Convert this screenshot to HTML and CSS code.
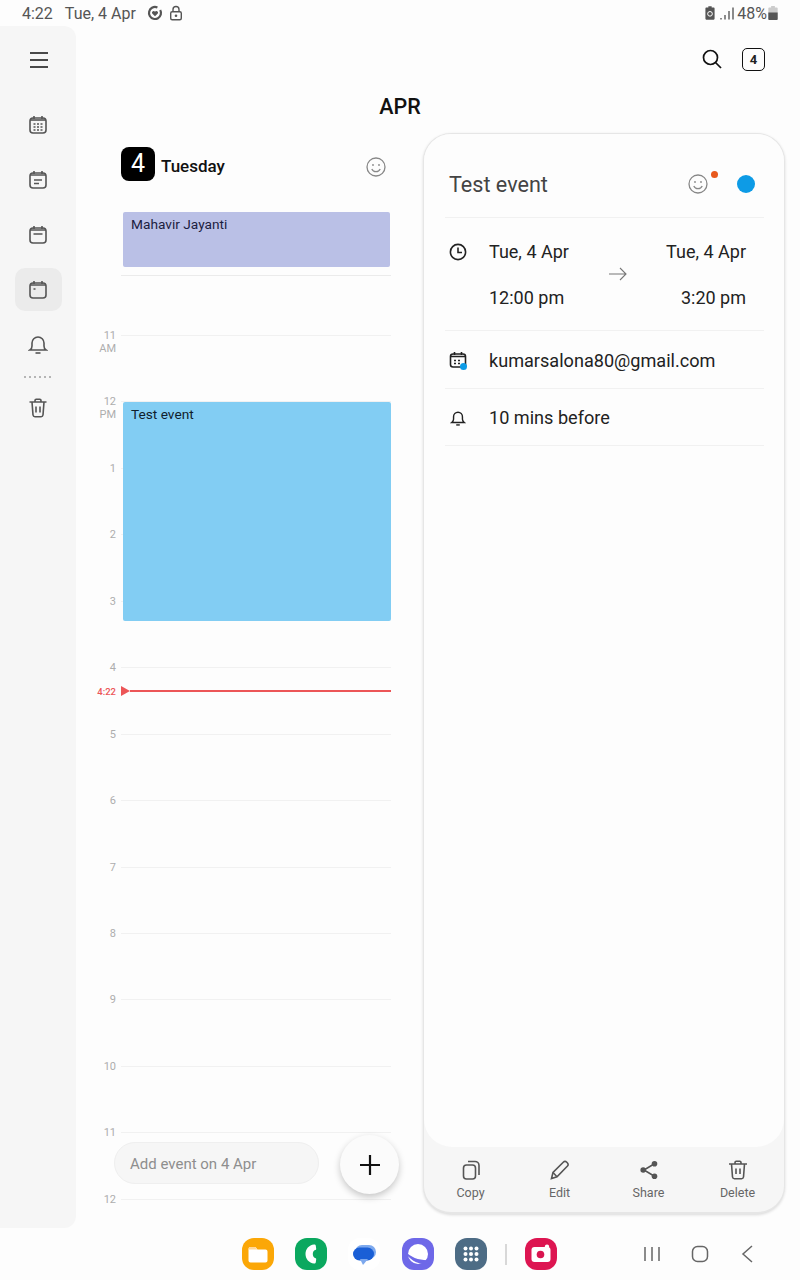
FILE: index.html
```html
<!DOCTYPE html>
<html>
<head>
    <meta charset="utf-8" />
    <meta name="viewport" content="width=device-width, initial-scale=1.0">
    <title>Calendar</title>
    <link rel="stylesheet" href="styles.css">
</head>
<body>
<div class="page">

    <div class="status">
        <span class="status-time">4:22</span>
        <span class="status-date">Tue, 4 Apr</span>
        <svg class="status-icon" viewBox="0 0 16 16"><circle cx="8" cy="8" r="6" fill="none" stroke="#555" stroke-width="2.2" stroke-dasharray="33 4.700" transform="rotate(-30 8 8)"/><path d="M8 11.300 5.200 8.400a1.600 1.600 0 0 1 2.800-1.600 1.600 1.600 0 0 1 2.800 1.600z" fill="#555"/></svg>
        <svg class="status-icon" viewBox="0 0 16 16"><path d="M5 7V4.500a3 3 0 0 1 6 0V7" fill="none" stroke="#555" stroke-width="1.400"/><rect x="2.700" y="6.700" width="10.600" height="8" rx="1.500" fill="none" stroke="#555" stroke-width="1.400"/><circle cx="8" cy="10.700" r="1.300" fill="#555"/></svg>
        <span class="status-right">
            <svg class="status-small" viewBox="0 0 12 16"><path d="M4 0h4v1.500h2.500a1 1 0 0 1 1 1V15a1 1 0 0 1-1 1h-9a1 1 0 0 1-1-1V2.500a1 1 0 0 1 1-1H4z" fill="#555"/><circle cx="6" cy="9" r="2.800" fill="none" stroke="#fff" stroke-width="1.200"/></svg>
            <svg class="status-signal" viewBox="0 0 14 13"><path d="M1 11v1.500M5 8v4.500M9 4v8.500M13 .5v12" stroke="#666" stroke-width="1.500" fill="none"/></svg>
            <span class="status-battery-text">48%</span>
            <svg class="status-small" viewBox="0 0 10 15"><path d="M3 0h4v1.500h2a1 1 0 0 1 1 1V14a1 1 0 0 1-1 1H1a1 1 0 0 1-1-1V2.500a1 1 0 0 1 1-1h2z" fill="#ccc"/><path d="M0 7h10v7a1 1 0 0 1-1 1H1a1 1 0 0 1-1-1z" fill="#555"/></svg>
        </span>
    </div>

    <div class="workspace">

        <nav class="sidebar">
            <svg class="menu-icon" viewBox="0 0 18 16"><path d="M0 1h18M0 8h18M0 15h18" stroke="#111" stroke-width="1.700" fill="none"/></svg>

            <div class="side-item">
                <svg class="side-icon" viewBox="0 0 20 20"><rect x="2" y="3" width="16" height="15" rx="3" class="ln"/><path d="M6 1v3M14 1v3" class="ln"/><path d="M2.500 5h15" class="ln"/><path d="M5.500 9h2M9 9h2M12.500 9h2M5.500 12h2M9 12h2M12.500 12h2M5.500 15h2M9 15h2M12.500 15h2" stroke="#555" stroke-width="1.500" fill="none"/></svg>
            </div>
            <div class="side-item">
                <svg class="side-icon" viewBox="0 0 20 20"><rect x="2" y="3" width="16" height="15" rx="3" class="ln"/><path d="M6 1v3M14 1v3M2.500 5h15M6 10h8M6 13.500h5" class="ln"/></svg>
            </div>
            <div class="side-item">
                <svg class="side-icon" viewBox="0 0 20 20"><rect x="2" y="3" width="16" height="15" rx="3" class="ln"/><path d="M6 1v3M14 1v3M2.500 5h15M5.500 9h9" class="ln"/></svg>
            </div>
            <div class="side-item side-active">
                <svg class="side-icon" viewBox="0 0 20 20"><rect x="2" y="3" width="16" height="15" rx="3" class="ln"/><path d="M6 1v3M14 1v3M2.500 5h15M5.500 9h2" class="ln"/></svg>
            </div>
            <div class="side-item">
                <svg class="side-icon" viewBox="0 0 20 20"><path d="M2 15c1.500-1 2-2 2-4V8a6 6 0 0 1 12 0v3c0 2 .5 3 2 4z" class="ln"/><path d="M7.500 18h5" class="ln"/></svg>
            </div>
            <div class="side-dots"></div>
            <div class="side-item">
                <svg class="side-icon" viewBox="0 0 20 20"><path d="M1.500 4h17M4 4l1 13a2 2 0 0 0 2 1.700h6a2 2 0 0 0 2-1.700l1-13M7 4V2.500A1.200 1.200 0 0 1 8.200 1.300h3.600A1.200 1.200 0 0 1 13 2.500V4M8 8.500v6M12 8.500v6" class="ln"/></svg>
            </div>
        </nav>

        <main class="main">
            <div class="toolbar">
                <svg class="search-icon" viewBox="0 0 20 20"><circle cx="8.500" cy="8.500" r="7" fill="none" stroke="#111" stroke-width="1.700"/><path d="M13.500 13.500 19 19" stroke="#111" stroke-width="1.700" fill="none"/></svg>
                <span class="today-box">4</span>
            </div>
            <h1 class="month">APR</h1>

            <div class="columns">
                <section class="day">
                    <div class="day-head">
                        <span class="day-num">4</span>
                        <span class="day-name">Tuesday</span>
                        <svg class="smile smile-day" viewBox="0 0 20 20"><circle cx="10" cy="10" r="9" class="sm"/><circle cx="7" cy="8" r=".9" fill="#888"/><circle cx="13" cy="8" r=".9" fill="#888"/><path d="M5.800 12a4.600 4.600 0 0 0 8.400 0" class="sm"/></svg>
                    </div>

                    <div class="allday">Mahavir Jayanti</div>

                    <div class="timeline">
                        <div class="hour hour-first"></div>
                        <div class="hour"><span class="hour-label">11<br>AM</span><span class="hour-line"></span></div>
                        <div class="hour"><span class="hour-label">12<br>PM</span><span class="hour-line"></span></div>
                        <div class="hour"><span class="hour-label">1</span><span class="hour-line"></span></div>
                        <div class="hour"><span class="hour-label">2</span><span class="hour-line"></span></div>
                        <div class="hour"><span class="hour-label">3</span><span class="hour-line"></span></div>
                        <div class="hour"><span class="hour-label">4</span><span class="hour-line"></span></div>
                        <div class="hour"><span class="hour-label">5</span><span class="hour-line"></span></div>
                        <div class="hour"><span class="hour-label">6</span><span class="hour-line"></span></div>
                        <div class="hour"><span class="hour-label">7</span><span class="hour-line"></span></div>
                        <div class="hour"><span class="hour-label">8</span><span class="hour-line"></span></div>
                        <div class="hour"><span class="hour-label">9</span><span class="hour-line"></span></div>
                        <div class="hour"><span class="hour-label">10</span><span class="hour-line"></span></div>
                        <div class="hour"><span class="hour-label">11</span><span class="hour-line"></span></div>
                        <div class="hour"><span class="hour-label">12</span><span class="hour-line"></span></div>

                        <div class="event">Test event</div>
                        <div class="now">
                            <span class="now-label">4:22</span>
                            <span class="now-arrow"></span>
                            <span class="now-line"></span>
                        </div>
                    </div>

                    <div class="add-pill">Add event on 4 Apr</div>
                    <div class="fab"><svg viewBox="0 0 20 20"><path d="M10 0v20M0 10h20" stroke="#111" stroke-width="2.200" fill="none"/></svg></div>
                </section>

                <section class="card">
                    <div class="card-body">
                        <div class="card-title-row">
                            <span class="card-title">Test event</span>
                            <span class="smile-wrap">
                                <svg class="smile smile-card" viewBox="0 0 20 20"><circle cx="10" cy="10" r="9" class="sm"/><circle cx="7" cy="8" r=".9" fill="#888"/><circle cx="13" cy="8" r=".9" fill="#888"/><path d="M5.800 12a4.600 4.600 0 0 0 8.400 0" class="sm"/></svg>
                                <span class="orange-dot"></span>
                            </span>
                            <span class="blue-dot"></span>
                        </div>

                        <div class="row row-time">
                            <svg class="row-icon clock" viewBox="0 0 18 18"><circle cx="9" cy="9" r="7.600" class="ln-dark"/><path d="M9 4.500V9.500H13" class="ln-dark"/></svg>
                            <div class="time-col">
                                <span>Tue, 4 Apr</span>
                                <span>12:00 pm</span>
                            </div>
                            <svg class="arrow" viewBox="0 0 18 14"><path d="M0 7h17M11 1l6 6-6 6" stroke="#777" stroke-width="1.100" fill="none"/></svg>
                            <div class="time-col time-end">
                                <span>Tue, 4 Apr</span>
                                <span>3:20 pm</span>
                            </div>
                        </div>

                        <div class="row row-mail">
                            <span class="cal-wrap">
                                <svg class="row-icon" viewBox="0 0 18 18"><rect x="1.500" y="3" width="15" height="13" rx="2.500" class="ln-dark"/><path d="M5.500 1v3M12.500 1v3M2 5.500h14M5 9.500h2M9 9.500h2M5 12.500h2M9 12.500h2" class="ln-dark"/></svg>
                                <span class="cal-dot"></span>
                            </span>
                            <span>kumarsalona80@gmail.com</span>
                        </div>

                        <div class="row row-alert">
                            <svg class="row-icon bell" viewBox="0 0 18 18"><path d="M2 14c1.300-1 2-2 2-3.500V7.500a5 5 0 0 1 10 0v3c0 1.500.7 2.500 2 3.500z" class="ln-dark"/><path d="M7 16.800h4" class="ln-dark"/></svg>
                            <span>10 mins before</span>
                        </div>
                    </div>

                    <div class="actions">
                        <div class="action">
                            <svg viewBox="0 0 20 20"><rect x="2.500" y="5" width="12" height="14" rx="3" class="ln"/><path d="M7 1.500h7a4 4 0 0 1 4 4V15" class="ln"/></svg>
                            <span>Copy</span>
                        </div>
                        <div class="action">
                            <svg viewBox="0 0 20 20"><path d="M1.500 18.500 3 12.500 13.500 2a2.100 2.100 0 0 1 3 0l1 1a2.100 2.100 0 0 1 0 3L7 16.800z" class="ln"/><path d="M3 12.500 7 16.800" class="ln"/></svg>
                            <span>Edit</span>
                        </div>
                        <div class="action">
                            <svg viewBox="0 0 20 20"><path d="M15 4 5 10l10 6" class="ln"/><circle cx="15.500" cy="3.800" r="2.800" fill="#555"/><circle cx="4.200" cy="10" r="2.800" fill="#555"/><circle cx="15.500" cy="16.200" r="2.800" fill="#555"/></svg>
                            <span>Share</span>
                        </div>
                        <div class="action">
                            <svg viewBox="0 0 20 20"><path d="M1 4h18M3.500 4l1 13a2 2 0 0 0 2 1.700h7a2 2 0 0 0 2-1.700l1-13M7 4V2.500A1.200 1.200 0 0 1 8.200 1.300h3.600A1.200 1.200 0 0 1 13 2.500V4M8 8.500v5.500M12 8.500v5.500" class="ln"/></svg>
                            <span>Delete</span>
                        </div>
                    </div>
                </section>
            </div>
        </main>
    </div>

    <div class="dock">
        <div class="apps">
            <span class="app app-files"><svg viewBox="0 0 32 32"><path d="M6.500 11a2 2 0 0 1 2-2h5l2 2.500h8a2 2 0 0 1 2 2v9a2 2 0 0 1-2 2h-15a2 2 0 0 1-2-2z" fill="#fff"/><path d="M6.500 11a2 2 0 0 1 2-2h5l2 2.500h-9z" fill="#ffd79a"/></svg></span>
            <span class="app app-phone"><svg viewBox="0 0 32 32"><path d="M19 6.500c-5 .5-8.500 4.400-8.500 9.500s3.500 9 8.500 9.500c1 .1 1.700-.4 1.800-1.200l.4-3c.1-.7-.3-1.200-1-1.300-1.600-.2-2.400-2.200-2.400-4s.8-3.800 2.400-4c.7-.1 1.100-.6 1-1.300l-.4-3c-.1-.8-.8-1.300-1.800-1.200z" fill="#fff"/></svg></span>
            <span class="app app-msg"><svg viewBox="0 0 32 32"><rect x="7" y="7" width="21" height="14" rx="7" fill="#7da9ee"/><rect x="5" y="9.500" width="21" height="13" rx="6.500" fill="#1a5fd6"/><path d="M12 21h8l-5 6z" fill="#7da9ee"/></svg></span>
            <span class="app app-net"><svg viewBox="0 0 32 32"><circle cx="16" cy="16" r="10" fill="#fff"/><path d="M3 13c6 7 16 10 26 9l-1 3c-9 3-21-2-25-12z" fill="#6e68e8"/></svg></span>
            <span class="app app-grid"><svg viewBox="0 0 32 32"><g fill="#fff"><circle cx="10.500" cy="10.500" r="2"/><circle cx="16" cy="10.500" r="2"/><circle cx="21.500" cy="10.500" r="2"/><circle cx="10.500" cy="16" r="2"/><circle cx="16" cy="16" r="2"/><circle cx="21.500" cy="16" r="2"/><circle cx="10.500" cy="21.500" r="2"/><circle cx="16" cy="21.500" r="2"/><circle cx="21.500" cy="21.500" r="2"/></g></svg></span>
            <span class="dock-sep"></span>
            <span class="app app-cam"><svg viewBox="0 0 32 32"><rect x="6.500" y="9" width="19" height="15" rx="3" fill="#fff"/><circle cx="15.500" cy="16.500" r="3.800" fill="#d9144f"/><circle cx="22" cy="8.800" r="2.200" fill="#fff"/></svg></span>
        </div>
        <div class="nav-keys">
            <svg viewBox="0 0 20 20"><path d="M3 3v14M10 3v14M17 3v14" stroke="#666" stroke-width="1.500" fill="none"/></svg>
            <svg viewBox="0 0 20 20"><rect x="2.500" y="2.500" width="15" height="15" rx="5" fill="none" stroke="#666" stroke-width="1.500"/></svg>
            <svg viewBox="0 0 20 20"><path d="M14 2 5 10l9 8" stroke="#666" stroke-width="1.500" fill="none"/></svg>
        </div>
    </div>

</div>
</body>
</html>
```

FILE: styles.css
```css
html, body {
    --ink: #1c1c1c;
    --grey: #555;
    --panel: #f6f6f6;
    --line: #f1f1f1;

    margin: 0;
    padding: 0;
    background-color: #fdfdfd;
    font-family: Roboto, "Liberation Sans", sans-serif;
    color: var(--ink);
}

.page {
    display: flex;
    flex-direction: column;
    width: 800px;
    height: 1280px;
    overflow: hidden;
}

.ln { fill: none; stroke: var(--grey); stroke-width: 1.6; }
.ln-dark { fill: none; stroke: #222; stroke-width: 1.6; }
.sm { fill: none; stroke: #888; stroke-width: 1.3; }

/* Status bar */
.status {
    display: flex;
    align-items: center;
    flex: none;
    height: 26px;
    padding: 0 22px 0 22px;
    font-size: 16px;
    color: var(--grey);
}

.status-date { margin-left: 12px; margin-right: 11px; }
.status-icon { width: 16px; height: 16px; margin-right: 5px; }
.status-right { display: flex; align-items: center; margin-left: auto; }
.status-small { width: 10px; height: 14px; }
.status-signal { width: 14px; height: 13px; margin: 0 3px 0 5px; }
.status-battery-text { margin-right: 1px; }

/* Sidebar + main */
.workspace {
    display: flex;
    flex: none;
    height: 1202px;
}

.sidebar {
    display: flex;
    flex-direction: column;
    align-items: center;
    flex: none;
    width: 76px;
    box-sizing: border-box;
    padding-top: 25px;
    background-color: var(--panel);
    border-radius: 0 12px 12px 0;
}

.menu-icon {
    flex: none;
    width: 18px;
    height: 16px;
    margin: 1px 0 35px 1px;
}

.side-item {
    display: flex;
    align-items: center;
    justify-content: center;
    width: 47px;
    height: 43px;
    margin-bottom: 12px;
    border-radius: 10px;
}

.side-active { background-color: #ebebeb; }
.side-icon { width: 20px; height: 20px; }

.side-dots {
    width: 28px;
    height: 2px;
    margin-top: -2px;
    margin-bottom: 8px;
    background-image: repeating-linear-gradient(to right, #b5b5b5 0, #b5b5b5 2px, transparent 2px, transparent 5px);
}

.main {
    display: flex;
    flex-direction: column;
    flex: 1;
    min-width: 0;
}

.toolbar {
    display: flex;
    align-items: center;
    justify-content: flex-end;
    gap: 20px;
    height: 66px;
    padding-right: 35px;
}

.search-icon { width: 20px; height: 20px; }

.today-box {
    display: block;
    width: 21px;
    height: 21px;
    border: 1.5px solid #111;
    border-radius: 5px;
    font-size: 13px;
    font-weight: 700;
    line-height: 21px;
    text-align: center;
    color: #222;
}

.month {
    margin: 0;
    padding-right: 76px;
    height: 41px;
    font-size: 21.5px;
    font-weight: 500;
    line-height: 30px;
    text-align: center;
    color: #111;
}

.columns {
    display: flex;
    flex: 1;
    min-height: 0;
}

/* Day column */
.day {
    position: relative;
    flex: none;
    width: 347px;
}

.day-head {
    display: flex;
    align-items: center;
    height: 48px;
    padding-top: 7px;
    padding-left: 45px;
    padding-right: 37px;
}

.day-num {
    width: 34px;
    height: 34px;
    background-color: #000;
    border-radius: 8px;
    color: #fff;
    font-size: 25px;
    line-height: 34px;
    text-align: center;
}

.day-name {
    margin-top: 4px;
    margin-left: 6px;
    font-size: 17px;
    font-weight: 500;
    color: #111;
}

.smile { flex: none; }
.smile-day { width: 20px; height: 20px; margin-top: 6px; margin-left: auto; }

.allday {
    height: 55px;
    box-sizing: border-box;
    margin: 24px 33px 0 47px;
    padding: 3px 8px;
    background-color: #bac0e6;
    border-radius: 2px;
    font-size: 13.7px;
    line-height: 18px;
    color: #1c2040;
}

.timeline {
    position: relative;
    margin-top: 8px;
    border-top: 1px solid #ebebeb;
    margin-left: 45px;
    margin-right: 32px;
}

.hour {
    position: relative;
    height: 66.45px;
}

.hour-first { height: 59px; }

.hour-line {
    display: block;
    border-top: 1px solid var(--line);
}

.hour-label {
    position: absolute;
    right: 100%;
    top: -6px;
    margin-right: 5px;
    font-size: 11px;
    line-height: 13px;
    text-align: right;
    color: #adadad;
}

.event {
    position: absolute;
    left: 2px;
    right: 0;
    top: 126px;
    height: 219px;
    box-sizing: border-box;
    padding: 3px 8px;
    background-color: #82cdf3;
    border-radius: 2px;
    font-size: 13.7px;
    line-height: 18px;
    color: #10202c;
}

.now {
    position: absolute;
    left: 0;
    right: 0;
    top: 410px;
    display: flex;
    align-items: center;
    height: 10px;
}

.now-label {
    position: absolute;
    right: 100%;
    margin-right: 5px;
    font-size: 9.5px;
    font-weight: 500;
    color: #ec5557;
}

.now-arrow {
    flex: none;
    width: 0;
    height: 0;
    border-left: 9px solid #ec5557;
    border-top: 5px solid transparent;
    border-bottom: 5px solid transparent;
}

.now-line {
    flex: 1;
    height: 1.5px;
    background-color: #ec5557;
}

.add-pill {
    position: absolute;
    left: 38px;
    top: 1009px;
    width: 205px;
    height: 42px;
    box-sizing: border-box;
    padding-left: 15px;
    background-color: var(--panel);
    border: 1px solid #efefef;
    border-radius: 21px;
    font-size: 15px;
    line-height: 42px;
    color: #8e8e8e;
}

.fab {
    display: flex;
    align-items: center;
    justify-content: center;
    position: absolute;
    left: 264px;
    top: 1002px;
    width: 59px;
    height: 59px;
    background-color: #fbfbfb;
    border-radius: 50%;
    box-shadow: 0 3px 7px rgba(0, 0, 0, 0.22);
}

.fab svg { width: 20px; height: 20px; }

/* Detail card */
.card {
    display: flex;
    flex-direction: column;
    flex: none;
    width: 362px;
    height: 1081px;
    box-sizing: border-box;
    background-color: var(--panel);
    border: 1.5px solid #e6e6e6;
    border-bottom-width: 2px;
    border-radius: 28px;
    box-shadow: 0 1px 3px rgba(0, 0, 0, 0.14);
    overflow: hidden;
}

.card-body {
    flex: 1;
    padding: 0 20px 0 21px;
    background-color: #fdfdfd;
    border-radius: 0 0 28px 28px;
}

.card-title-row {
    display: flex;
    align-items: center;
    height: 66px;
    padding: 17px 4px 0 4px;
    border-bottom: 1px solid var(--line);
}

.card-title {
    flex: 1;
    margin-top: 1px;
    font-size: 21.6px;
    color: #444;
}

.smile-wrap { position: relative; display: block; width: 20px; height: 20px; margin-right: 29px; }
.smile-card { display: block; width: 20px; height: 20px; }

.orange-dot {
    position: absolute;
    left: 23px;
    top: -3px;
    width: 7px;
    height: 7px;
    background-color: #e8591c;
    border-radius: 50%;
}

.blue-dot {
    width: 18px;
    height: 18px;
    margin-right: 5px;
    background-color: #0d9be6;
    border-radius: 50%;
}

.row {
    display: flex;
    align-items: center;
    padding: 0 4px;
    border-bottom: 1px solid var(--line);
    font-size: 18.1px;
    color: #222;
}

.row-icon { display: block; width: 18px; height: 18px; flex: none; }

.row-time { height: 112px; }
.row-mail { height: 54.5px; padding-top: 2px; }
.row-alert { height: 54.5px; padding-top: 2px; }

.row-time .clock { align-self: flex-start; margin-top: 25px; }
.bell { width: 16px; height: 16px; margin-left: 1px; margin-right: 1px; }

.time-col {
    display: flex;
    flex-direction: column;
    gap: 25px;
    margin-left: 22px;
    font-size: 18px;
    line-height: 21px;
}

.time-end { margin-left: 0; margin-right: 14px; align-items: flex-end; }

.arrow { width: 18px; height: 14px; margin: 0 auto; }

.row-mail > span:last-child, .row-alert > span:last-child { margin-left: 22px; }

.cal-wrap { position: relative; display: block; width: 18px; height: 18px; flex: none; }

.cal-dot {
    position: absolute;
    right: 0;
    bottom: -1px;
    width: 7px;
    height: 7px;
    background-color: #0d9be6;
    border-radius: 50%;
}

.actions {
    display: grid;
    grid-template-columns: repeat(4, 89px);
    flex: none;
    height: 65px;
    padding-left: 2px;
}

.action {
    display: flex;
    flex-direction: column;
    align-items: center;
    padding-top: 13px;
    font-size: 12.5px;
    color: #666;
}

.action svg { width: 20px; height: 20px; margin-bottom: 5px; }

/* Bottom dock */
.dock {
    display: flex;
    align-items: center;
    flex: 1;
    padding-left: 242px;
}

.apps {
    display: flex;
    align-items: center;
    gap: 21.2px;
}

.app {
    display: block;
    width: 32px;
    height: 32px;
    border-radius: 12px;
}

.app svg { display: block; width: 32px; height: 32px; }

.app-files { background-color: #fba707; }
.app-phone { background-color: #0ba85f; }
.app-msg { background-color: #fff; }
.app-net { background-color: #6e68e8; }
.app-grid { background-color: #4d6c85; }
.app-cam { background-color: #dd1551; }

.dock-sep {
    width: 2px;
    height: 21px;
    margin: 0 -3px;
    background-color: #d8d8d8;
}

.nav-keys {
    display: flex;
    align-items: center;
    gap: 28px;
    margin-left: 85px;
}

.nav-keys svg { width: 20px; height: 20px; }
```
